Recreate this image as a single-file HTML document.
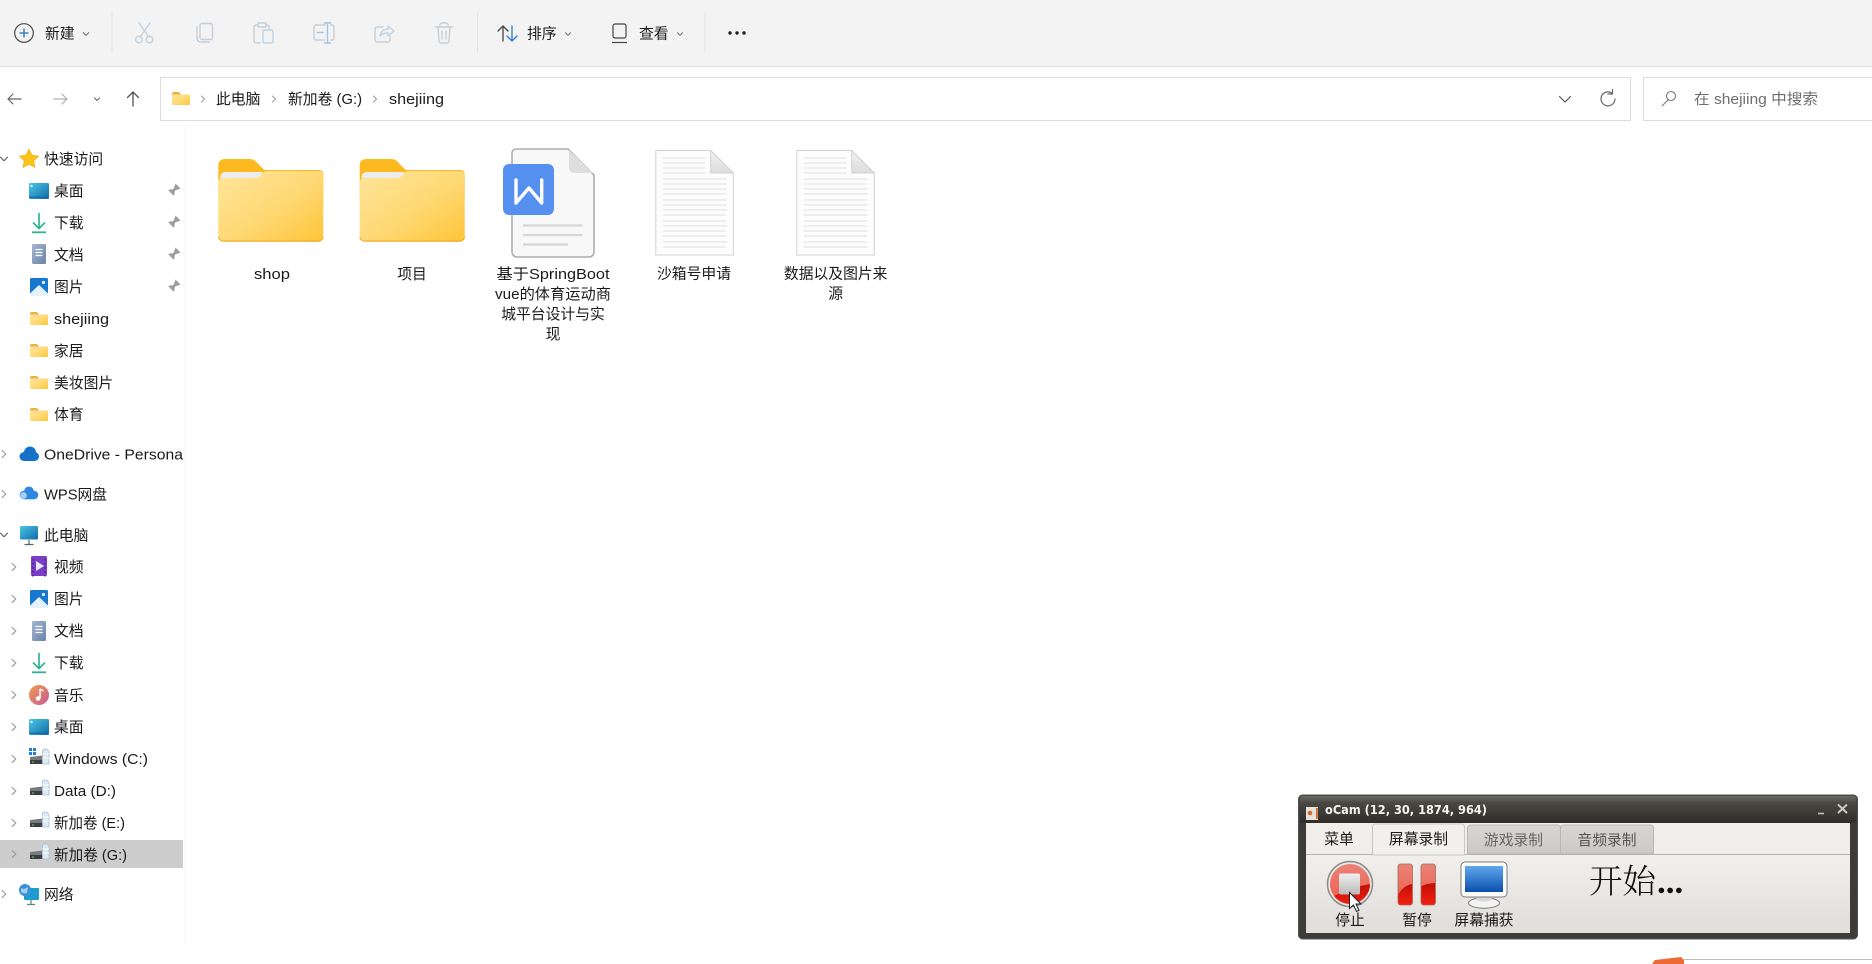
<!DOCTYPE html>
<html lang="zh"><head><meta charset="utf-8"><title>shejiing</title>
<style>
html,body{margin:0;padding:0;background:#fff;width:1872px;height:964px;overflow:hidden}
svg{display:block;filter:blur(.3px)}
text{font-family:"Liberation Sans","Noto Sans CJK SC",sans-serif;font-size:14.8px;fill:#1a1a1a}
.g{fill:#6d6d6d}
.s{fill:none;stroke-linecap:round;stroke-linejoin:round}
</style></head><body>
<svg xmlns="http://www.w3.org/2000/svg" width="1872" height="964" viewBox="0 0 1872 964">
<defs>
<linearGradient id="fb" x1="0" y1="0" x2="1" y2="1"><stop offset="0" stop-color="#ffe59a"/><stop offset=".55" stop-color="#ffd873"/><stop offset="1" stop-color="#fdc436"/></linearGradient>
<linearGradient id="dk" x1="0" y1="0" x2="1" y2="1"><stop offset="0" stop-color="#4cc6e4"/><stop offset="1" stop-color="#0f6aa8"/></linearGradient>
<linearGradient id="dc" x1="0" y1="0" x2="1" y2="1"><stop offset="0" stop-color="#a5b6d2"/><stop offset="1" stop-color="#6b84a8"/></linearGradient>
<linearGradient id="mu" x1="0" y1="0" x2="1" y2="1"><stop offset="0" stop-color="#f09a4a"/><stop offset="1" stop-color="#c75c98"/></linearGradient>
<linearGradient id="tb" x1="0" y1="0" x2="0" y2="1"><stop offset="0" stop-color="#6c6b66"/><stop offset=".25" stop-color="#494843"/><stop offset="1" stop-color="#2f2d29"/></linearGradient>
<linearGradient id="pn" x1="0" y1="0" x2="0" y2="1"><stop offset="0" stop-color="#f2f0ec"/><stop offset="1" stop-color="#dfddd9"/></linearGradient>
<linearGradient id="tg" x1="0" y1="0" x2="0" y2="1"><stop offset="0" stop-color="#d8d6d3"/><stop offset="1" stop-color="#cbc9c6"/></linearGradient>
<linearGradient id="rt" x1="0" y1="0" x2="0" y2="1"><stop offset="0" stop-color="#e98478"/><stop offset="1" stop-color="#ef5a48"/></linearGradient>
<linearGradient id="rb" x1="0" y1="0" x2="0" y2="1"><stop offset="0" stop-color="#c00f08"/><stop offset="1" stop-color="#f2200f"/></linearGradient>
<linearGradient id="sq" x1="0" y1="0" x2="0" y2="1"><stop offset="0" stop-color="#f0f0f0"/><stop offset="1" stop-color="#b9b9b7"/></linearGradient>
<linearGradient id="sc" x1="0" y1="0" x2="0" y2="1"><stop offset="0" stop-color="#5fa8ec"/><stop offset="1" stop-color="#0b4fae"/></linearGradient>
<linearGradient id="fd" x1="0" y1="0" x2="0" y2="1"><stop offset="0" stop-color="#f2f2f2"/><stop offset="1" stop-color="#dcdcdc"/></linearGradient>
<clipPath id="stopclip"><circle cx="1350" cy="884" r="20"/></clipPath>

<symbol id="folder" overflow="visible"><path d="M0 3a2 2 0 0 1 2-2h5l2 2.500h7a2 2 0 0 1 2 2V8H0z" fill="#e9b441"/><rect x="0" y="3.500" width="18" height="10.500" rx="1" fill="url(#fb)"/></symbol>
<symbol id="pin" overflow="visible"><path d="M-6.500 7-2 2-5-1 .5-2 2.500-7.500 7.500-2.500 2-.5 1 5-2 2z" fill="#9a9ea4"/></symbol>
<symbol id="desk" overflow="visible"><rect x="-10" y="-8" width="20" height="16" rx="1.500" fill="url(#dk)"/><rect x="-10" y="5.500" width="20" height="1.500" fill="#0d5d95" opacity=".6"/><rect x="-8.500" y="-6" width="2" height="2" fill="#d6f4ff"/></symbol>
<symbol id="dl" overflow="visible"><path d="M0-9.500V5M-5.500 0 0 5.500 5.500 0" class="s" stroke="#2fb593" stroke-width="1.700"/><path d="M-7 9.300H7" stroke="#2fb593" stroke-width="1.800"/></symbol>
<symbol id="doc" overflow="visible"><rect x="-7" y="-10" width="14" height="20" rx="1.200" fill="url(#dc)"/><path d="M-3.500-4.500h7M-3.500-1.500h7M-3.500 1.500h7" stroke="#fff" stroke-width="1.200"/></symbol>
<symbol id="pic" overflow="visible"><rect x="-9" y="-9" width="18" height="18" rx="1.500" fill="#1878d0"/><path d="M-9 9-9 6.500 0-2 9 6.500 9 9z" fill="#e6f2fb"/><circle cx="4.500" cy="-4.500" r="1.500" fill="#fff"/></symbol>
<symbol id="chev" overflow="visible"><path d="M-1.800-3.500 1.800 0-1.800 3.500" class="s" stroke="#9a9a9a" stroke-width="1.200"/></symbol>
<symbol id="chevd" overflow="visible"><path d="M-3.500-1.800 0 1.800 3.500-1.800" class="s" stroke="#666" stroke-width="1.200"/></symbol>
<symbol id="drive" overflow="visible"><path d="M-10-3 3-4.500V4H-10z" fill="#777b80"/><rect x="-10" y="0" width="13" height="4" fill="#3a3d41"/><circle cx="-7" cy="2" r=".8" fill="#7fe08a"/><path d="M2.500 4V-9a2 2 0 0 1 2-2h1a3.500 3.500 0 0 1 3.500 3.500V4z" fill="#dce8f2" stroke="#a9bfd2" stroke-width=".8"/><path d="M2.500-6H9M2.500-2H9" stroke="#fff" stroke-width="1"/></symbol>

<symbol id="txt" overflow="visible">
<path d="M.5.500H55.400L78 23V105H.5z" fill="#fdfdfd" stroke="#cfd2d6"/>
<path d="M55.400.500V23H78z" fill="url(#fd)" stroke="#cfd2d6"/>
<path d="M7.500 8H50M7.500 13H50M7.500 18H50M7.500 23H50M7.500 29H71M7.500 34H71M7.500 39H71M7.500 44H71M7.500 50H71M7.500 55H71M7.500 60H71M7.500 65H71M7.500 71H71M7.500 76H71M7.500 81H71M7.500 86H71M7.500 92H71M7.500 97H71" stroke="#dfe0e3" stroke-width="1"/>
</symbol>
<symbol id="bigfolder" overflow="visible">
<path d="M0 6a6 6 0 0 1 6-6h26a8 8 0 0 1 6 3l8 8h55a4 4 0 0 1 4 4v24H0z" fill="#fdb920"/>
<path d="M2 19a5 5 0 0 1 5-6h38l-3 6z" fill="#ececec"/>
<path d="M0 23a4 4 0 0 1 4-4h34a6 6 0 0 0 4-2l4-4a3 3 0 0 1 2-1h53a4 4 0 0 1 4 4v62a5 5 0 0 1-5 5H5a5 5 0 0 1-5-5z" fill="url(#fb)"/>
<path d="M0 78a5 5 0 0 0 5 4h95a5 5 0 0 0 5-4" fill="none" stroke="#e8ae3c" stroke-width="1"/>
</symbol>
</defs>

<rect width="1872" height="964" fill="#fff"/>

<!-- toolbar -->
<rect width="1872" height="66" fill="#f3f3f3"/>
<rect y="66" width="1872" height="1.200" fill="#e3e3e3"/>
<g stroke="#e4e4e4"><path d="M112 12V53M477.500 12V53M705 12V53"/></g>
<circle cx="24" cy="33" r="9.300" fill="none" stroke="#4a4a4a" stroke-width="1.200"/>
<path d="M24 28.500v9M19.500 33h9" stroke="#1f73c2" stroke-width="1.300"/>
<text x="45" y="38.500">新建</text>
<use href="#chevd" transform="translate(86 34) scale(.8)"/>
<g class="s" stroke="#c3d2df" stroke-width="1.400">
<path d="M139 23 149 37M150 23 140 37"/><circle cx="139" cy="39.500" r="3.300"/><circle cx="149.500" cy="39.500" r="3.300"/>
</g>
<g class="s" stroke="#c3ced8" stroke-width="1.400"><rect x="200" y="23.500" width="12.500" height="16" rx="2"/><path d="M197 27v11a4 4 0 0 0 4 4h8"/></g>
<g class="s" stroke="#c8ced4" stroke-width="1.400"><path d="M257 25h-1a2 2 0 0 0-2 2v14a2 2 0 0 0 2 2h4M266 25h1a2 2 0 0 1 2 2v1"/><rect x="258" y="23" width="8" height="4" rx="1"/></g>
<rect x="263" y="30" width="10" height="13" rx="1.500" class="s" stroke="#bcd3e6" stroke-width="1.400"/>
<g class="s" stroke="#c8ced4" stroke-width="1.400"><path d="M325 25h-9a2 2 0 0 0-2 2v11a2 2 0 0 0 2 2h9M331 25h1a2 2 0 0 1 2 2v11a2 2 0 0 1-2 2h-1"/></g>
<path d="M327.500 23V43M324.500 23h6M324.500 43h6M317.500 32.500h5.500" class="s" stroke="#9cc5e6" stroke-width="1.400"/>
<g class="s" stroke="#c8ced4" stroke-width="1.400"><path d="M383 27h-6a2 2 0 0 0-2 2v11a2 2 0 0 0 2 2h11a2 2 0 0 0 2-2v-3"/></g>
<path d="M380 36c1-5 4-7 8-7v-3l6 5-6 5v-3c-4 0-6 1-8 3z" class="s" stroke="#bcd3e6" stroke-width="1.400"/>
<g class="s" stroke="#c8ced4" stroke-width="1.400"><path d="M435.500 27H452.500M440 27v-2a2 2 0 0 1 2-2h4a2 2 0 0 1 2 2v2M438 27l1 14a2 2 0 0 0 2 2h6a2 2 0 0 0 2-2l1-14M442 31v8M446 31v8"/></g>
<path d="M503 41V26M498 31 503 26 508 31" class="s" stroke="#444" stroke-width="1.300"/>
<path d="M512 26V41M507 36 512 41 517 36" class="s" stroke="#2b7ed0" stroke-width="1.300"/>
<text x="527" y="38.500">排序</text>
<use href="#chevd" transform="translate(568 34) scale(.75)"/>
<rect x="613" y="24" width="13" height="14" rx="2" fill="none" stroke="#444" stroke-width="1.200"/>
<path d="M612 42.500h15" stroke="#444" stroke-width="1.200"/>
<text x="639" y="38.500">查看</text>
<use href="#chevd" transform="translate(680 34) scale(.75)"/>
<g fill="#222"><circle cx="730" cy="33" r="1.700"/><circle cx="737" cy="33" r="1.700"/><circle cx="744" cy="33" r="1.700"/></g>

<!-- nav -->
<path d="M21 99H8M13 94 8 99 13 104" class="s" stroke="#666" stroke-width="1.200"/>
<path d="M54 99H67M62 94 67 99 62 104" class="s" stroke="#b0b0b0" stroke-width="1.200"/>
<path d="M94.500 98 97 100.500 99.500 98" class="s" stroke="#666" stroke-width="1.100"/>
<path d="M133 106V92M127.500 97.500 133 92 138.500 97.500" class="s" stroke="#555" stroke-width="1.300"/>
<rect x="160.500" y="77.500" width="1470" height="43" fill="#fff" stroke="#dcdcdc"/>
<use href="#folder" x="172" y="91"/>
<use href="#chev" transform="translate(203 99) scale(.85)"/>
<text x="216" y="104">此电脑</text>
<use href="#chev" transform="translate(274 99) scale(.85)"/>
<text x="288" y="104" textLength="74" lengthAdjust="spacingAndGlyphs">新加卷 (G:)</text>
<use href="#chev" transform="translate(375 99) scale(.85)"/>
<text x="389" y="104" textLength="55" lengthAdjust="spacingAndGlyphs">shejiing</text>
<path d="M1559.500 96.500 1565 102 1570.500 96.500" class="s" stroke="#555" stroke-width="1.200"/>
<path d="M1612.500 93.500A7 7 0 1 0 1615 99M1612.500 89.500v4.500h-4.500" class="s" stroke="#666" stroke-width="1.200"/>
<rect x="1643.500" y="77.500" width="240" height="43" fill="#fff" stroke="#dcdcdc"/>
<circle cx="1671" cy="96" r="4.500" fill="none" stroke="#777" stroke-width="1.100"/>
<path d="M1668 100 1662 106" stroke="#777" stroke-width="1.100"/>
<text class="g" x="1694" y="104" textLength="124" lengthAdjust="spacingAndGlyphs">在 shejiing 中搜索</text>

<!-- sidebar -->
<path d="M185.500 125V945" stroke="#f4f4f4"/>
<rect x="0" y="840" width="183" height="28" fill="#cdcdcd"/>
<use href="#chevd" transform="translate(4 159)"/>
<path d="M29 149l3 6.200 6.700.9-4.900 4.700 1.200 6.700-6-3.200-6 3.200 1.200-6.700-4.900-4.700 6.700-.9z" fill="#fcc419" stroke="#f3a80a" stroke-width=".6"/>
<text x="44" y="164">快速访问</text>

<use href="#desk" x="39" y="191"/><text x="54" y="196">桌面</text><use href="#pin" x="173" y="191"/>
<use href="#dl" x="39" y="223"/><text x="54" y="228">下载</text><use href="#pin" x="173" y="223"/>
<use href="#doc" x="39" y="254"/><text x="54" y="260">文档</text><use href="#pin" x="173" y="255"/>
<use href="#pic" x="39" y="287"/><text x="54" y="292">图片</text><use href="#pin" x="173" y="287"/>
<use href="#folder" x="30" y="311"/><text x="54" y="324" textLength="55" lengthAdjust="spacingAndGlyphs">shejiing</text>
<use href="#folder" x="30" y="343"/><text x="54" y="356">家居</text>
<use href="#folder" x="30" y="375"/><text x="54" y="388">美妆图片</text>
<use href="#folder" x="30" y="407"/><text x="54" y="419.500">体育</text>

<use href="#chev" x="4" y="454"/>
<g fill="#1572c8"><circle cx="24" cy="456.500" r="4.500"/><circle cx="30" cy="452.500" r="6"/><circle cx="34.500" cy="456.500" r="4.500"/><rect x="24" y="456" width="10.500" height="5"/></g>
<text x="44" y="459.500" textLength="139" lengthAdjust="spacingAndGlyphs">OneDrive - Persona</text>

<use href="#chev" x="4" y="494"/>
<g fill="#2f86e0"><circle cx="24" cy="495" r="4.300"/><circle cx="29" cy="491.500" r="5"/><circle cx="34" cy="495" r="4.300"/><rect x="24" y="495" width="10" height="4.300"/></g>
<circle cx="23.500" cy="495.500" r="3.300" fill="#a7d2f7"/>
<text x="44" y="499.500" textLength="63" lengthAdjust="spacingAndGlyphs">WPS网盘</text>

<use href="#chevd" transform="translate(4 535)"/>
<rect x="20" y="526" width="18" height="13.500" rx="1" fill="url(#dk)"/>
<path d="M29 540v4M24.500 544.500h9" stroke="#566" stroke-width="1.200"/>
<text x="44" y="540.500">此电脑</text>

<rect x="31" y="556" width="16" height="20" rx="1.500" fill="#7a3ec6"/>
<path d="M36 561 44 566 36 571z" fill="#e8e9ff"/>
<path d="M33 559v18M45 559v18" stroke="#4a2390" stroke-width="1.400" stroke-dasharray="1.500 2.500"/>
<use href="#chev" x="14" y="567"/><text x="54" y="572">视频</text>
<use href="#chev" x="14" y="599"/><use href="#pic" x="39" y="599"/><text x="54" y="604">图片</text>
<use href="#chev" x="14" y="631"/><use href="#doc" x="39" y="631"/><text x="54" y="636">文档</text>
<use href="#chev" x="14" y="663"/><use href="#dl" x="39" y="663"/><text x="54" y="668">下载</text>
<use href="#chev" x="14" y="695"/><circle cx="39" cy="695" r="10" fill="url(#mu)"/>
<path d="M40 689v9.500M40 689 43.500 691" stroke="#fff" stroke-width="1.500" fill="none"/><circle cx="38" cy="698.500" r="2.300" fill="#fff"/><text x="54" y="700.500">音乐</text>
<use href="#chev" x="14" y="727"/><use href="#desk" x="39" y="727"/><text x="54" y="732">桌面</text>
<use href="#chev" x="14" y="759"/><use href="#drive" x="40" y="760"/>
<g fill="#1f7fd0"><rect x="29" y="748" width="3" height="3"/><rect x="33" y="748" width="3" height="3"/><rect x="29" y="752" width="3" height="3"/><rect x="33" y="752" width="3" height="3"/></g>
<text x="54" y="764" textLength="94" lengthAdjust="spacingAndGlyphs">Windows (C:)</text>
<use href="#chev" x="14" y="791"/><use href="#drive" x="40" y="791"/><text x="54" y="796" textLength="62" lengthAdjust="spacingAndGlyphs">Data (D:)</text>
<use href="#chev" x="14" y="823"/><use href="#drive" x="40" y="823"/><text x="54" y="828" textLength="71" lengthAdjust="spacingAndGlyphs">新加卷 (E:)</text>
<use href="#chev" x="14" y="854"/><use href="#drive" x="40" y="855"/><text x="54" y="860" textLength="73" lengthAdjust="spacingAndGlyphs">新加卷 (G:)</text>
<use href="#chev" x="4" y="894"/>
<rect x="24" y="888" width="15" height="12" rx="1" fill="#1e9cd0"/>
<path d="M31 900v4M27 904.500h8" stroke="#5d7f90" stroke-width="1.200"/>
<circle cx="25" cy="890" r="6" fill="#3a8fd6"/><path d="M21 888c3 2 5 0 7-1l-1 6c-3 1-4 0-6-1z" fill="#9fd0ef"/>
<text x="44" y="899.500">网络</text>

<!-- content -->
<use href="#bigfolder" x="218.300" y="159"/>
<use href="#bigfolder" x="359.700" y="159"/>
<text x="272" y="279" text-anchor="middle" textLength="36" lengthAdjust="spacingAndGlyphs">shop</text>
<text x="412" y="279" text-anchor="middle">项目</text>

<path d="M516 149H568L594 175V252a5 5 0 0 1-5 5H517a5 5 0 0 1-5-5V153a4 4 0 0 1 4-4z" fill="#f8f8f8" stroke="#adadad" stroke-width="1.600"/>
<path d="M569 150V168a5 5 0 0 0 5 5H593z" fill="#dedede"/>
<path d="M523 225.500H582.500M523 235H582.500M523 244.500H568" stroke="#d6d6d6" stroke-width="2.200"/>
<rect x="503" y="164" width="51" height="51" rx="6" fill="#5590f0"/>
<path d="M516 180V203L529 188 541.700 203V180" class="s" stroke="#fff" stroke-width="3.400"/>
<text x="553" y="279" text-anchor="middle" textLength="113" lengthAdjust="spacingAndGlyphs">基于SpringBoot</text>
<text x="553" y="299" text-anchor="middle" textLength="116" lengthAdjust="spacingAndGlyphs">vue的体育运动商</text>
<text x="553" y="319" text-anchor="middle">城平台设计与实</text>
<text x="553" y="339" text-anchor="middle">现</text>

<use href="#txt" x="655.300" y="150"/>
<use href="#txt" x="796.300" y="150"/>
<text x="694" y="278.500" text-anchor="middle">沙箱号申请</text>
<text x="835.700" y="278.500" text-anchor="middle">数据以及图片来</text>
<text x="835.700" y="298.500" text-anchor="middle">源</text>

<!-- oCam -->
<rect x="1298.500" y="795" width="559" height="144" rx="4" fill="#3d3c38" stroke="#55534f"/>
<rect x="1299.500" y="796" width="557" height="27" rx="3" fill="url(#tb)"/>
<rect x="1306" y="807" width="12" height="13" fill="#e8e2dc"/>
<circle cx="1310" cy="813" r="2.300" fill="#d96a2b"/><rect x="1316" y="808" width="1.800" height="11" fill="#d96a2b"/>
<text x="1325" y="814" style="font-family:'DejaVu Sans',sans-serif;font-size:12.500px;font-weight:bold;fill:#f3f3f0" textLength="162" lengthAdjust="spacingAndGlyphs">oCam (12, 30, 1874, 964)</text>
<path d="M1818 813.500h6" stroke="#bfbfbc" stroke-width="1.600"/>
<path d="M1838 804.500 1847 813M1847 804.500 1838 813" stroke="#c8c8c5" stroke-width="2"/>
<rect x="1306" y="823" width="544" height="110" fill="#f0eeeb"/>
<rect x="1306" y="854" width="544" height="79" fill="url(#pn)"/>
<path d="M1306 854.500H1850" stroke="#b4b2ae"/>
<path d="M1467.500 854V828a3 3 0 0 1 3-3h87a3 3 0 0 1 3 3v26z" fill="url(#tg)" stroke="#b9b7b3"/>
<path d="M1560.500 854V828a3 3 0 0 1 3-3h87a3 3 0 0 1 3 3v26z" fill="url(#tg)" stroke="#b9b7b3"/>
<path d="M1372.500 855V827a3 3 0 0 1 3-3h86a3 3 0 0 1 3 3v28z" fill="#f2f0ed" stroke="#c9c7c3"/>
<text x="1339" y="844" text-anchor="middle">菜单</text>
<text x="1418.500" y="844" text-anchor="middle">屏幕录制</text>
<text x="1513.500" y="845" text-anchor="middle" style="fill:#666">游戏录制</text>
<text x="1607" y="845" text-anchor="middle" style="fill:#555">音频录制</text>
<!-- stop -->
<circle cx="1350" cy="884" r="22.500" fill="#e9e7e4" stroke="#8d8b88" stroke-width="1.500"/>
<circle cx="1350" cy="884" r="20" fill="url(#rt)"/>
<path d="M1330 898C1342 892 1355 886 1372 884V906H1330z" fill="url(#rb)" clip-path="url(#stopclip)"/>
<rect x="1339" y="873.500" width="21" height="21" rx="1.500" fill="url(#sq)"/>
<path d="M1349.500 892.500V908.500L1353.500 905 1356.500 911.500 1359 910.300 1356 904H1361z" fill="#fff" stroke="#222" stroke-width="1"/>
<!-- pause -->
<rect x="1398" y="864" width="14.500" height="41" rx="2.500" fill="url(#rt)" stroke="#a06a62" stroke-width=".8"/>
<path d="M1398.400 894C1402 888 1407 885 1412.100 884V902.500a2.200 2.200 0 0 1-2.200 2.200h-9.300a2.200 2.200 0 0 1-2.200-2.200z" fill="url(#rb)"/>
<rect x="1421" y="864" width="14.500" height="41" rx="2.500" fill="url(#rt)" stroke="#a06a62" stroke-width=".8"/>
<path d="M1421.400 886C1426 884 1431 883 1435.100 883V902.500a2.200 2.200 0 0 1-2.200 2.200h-9.300a2.200 2.200 0 0 1-2.200-2.200z" fill="url(#rb)"/>
<!-- monitor -->
<ellipse cx="1484" cy="903" rx="15.500" ry="5.200" fill="#f3f3f3" stroke="#777"/>
<path d="M1475 896 1477 900C1480 902 1488 902 1491 900L1493 896z" fill="#d6d6d6"/>
<rect x="1461" y="862" width="46" height="35" rx="4" fill="#fbfbfb" stroke="#7c7c7c"/>
<rect x="1465" y="866" width="38" height="26" fill="url(#sc)"/>
<text x="1350" y="925" text-anchor="middle">停止</text>
<text x="1417" y="925" text-anchor="middle">暂停</text>
<text x="1484" y="925" text-anchor="middle">屏幕捕获</text>
<text x="1589" y="893" style="font-family:'Noto Serif CJK SC',serif;font-size:33.500px;font-weight:300;fill:#111">开始</text>
<text x="1657" y="893" style="font-family:'Liberation Serif',serif;font-size:35px;font-weight:bold;fill:#111">...</text>
<!-- bottom orange -->
<path d="M1652 964 1655 960 1681 957 1684 960V964z" fill="#ee6a35"/>
<path d="M1684 959.500H1872" stroke="#bdbdbd"/>
</svg>
</body></html>
